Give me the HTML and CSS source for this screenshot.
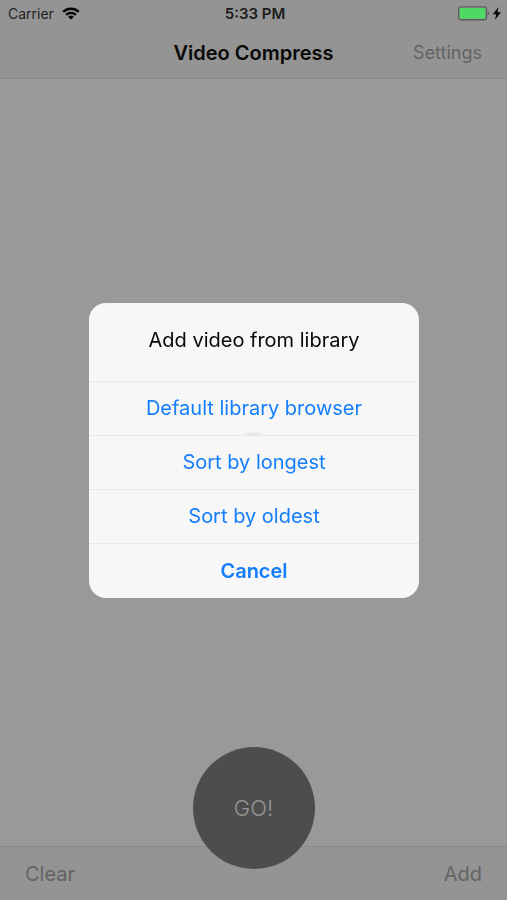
FILE: index.html
```html
<!DOCTYPE html>
<html lang="en">
<head>
<meta charset="utf-8">
<meta name="viewport" content="width=device-width, initial-scale=1">
<title>Video Compress</title>
<link rel="stylesheet" href="styles.css">
</head>
<body>
<div class="app">
  <header class="top">
    <div class="status">
      <div class="carrier">
        <span>Carrier</span>
        <svg class="wifi" width="18" height="13" viewBox="0 0 18 13" aria-hidden="true">
          <path d="M1.2 4.9a11.2 11.2 0 0 1 15.6 0" />
          <path d="M4.1 7.9a7 7 0 0 1 9.8 0" />
          <path class="wifi-dot" d="M9 12.6 6.2 9.9a4 4 0 0 1 5.600 0z" />
        </svg>
      </div>
      <span class="time">5:33 PM</span>
      <div class="power">
        <svg width="44" height="15" viewBox="0 0 44 15" aria-hidden="true">
          <rect class="cell" x="0.7" y="0.9" width="27.6" height="12.8" rx="2" />
          <rect class="charge" x="1.7" y="1.9" width="25.6" height="10.8" rx="0.8" />
          <path class="cap" d="M29.600 4.800q2.800 2.500 0 5z" />
          <path class="bolt" d="M40.600 1 34.800 8.300h3.500L36.900 14l6-7.700h-3.500z" />
        </svg>
      </div>
    </div>
    <nav class="nav">
      <h1>Video Compress</h1>
      <button class="bar-button settings" type="button">Settings</button>
    </nav>
  </header>
  <main class="content"></main>
  <footer class="toolbar">
    <button class="bar-button" type="button">Clear</button>
    <button class="go" type="button">GO!</button>
    <button class="bar-button" type="button">Add</button>
  </footer>
</div>
<div class="overlay">
  <section class="dialog" role="dialog" aria-modal="true" aria-labelledby="dialog-title">
    <h2 id="dialog-title">Add video from library</h2>
    <button class="default" type="button">Default library browser</button>
    <button type="button">Sort by longest</button>
    <button type="button">Sort by oldest</button>
    <button class="cancel" type="button">Cancel</button>
  </section>
</div>
</body>
</html>
```
FILE: styles.css
```css
* {
  box-sizing: border-box;
}

body {
  margin: 0;
  font-family: Inter, "Liberation Sans", sans-serif;
  color: #090909;
  background: #999;
}

h1,
h2 {
  margin: 0;
}

button {
  border: 0;
  padding: 0;
  background: none;
  font: inherit;
}

.app {
  display: flex;
  flex-direction: column;
  min-height: 100vh;
}

.top {
  background: #949494;
  border-bottom: 1px solid #8a8a8a;
}

.status {
  display: grid;
  grid-template-columns: 1fr auto 1fr;
  align-items: center;
  height: 27px;
  padding: 0 5px 0 8px;
  font-size: 14px;
}

.carrier {
  display: flex;
  align-items: center;
  gap: 8px;
  color: #222;
}

.wifi {
  fill: none;
  stroke: #050505;
  stroke-width: 2.3;
}

.wifi-dot {
  fill: #050505;
  stroke: none;
}

.time {
  font-size: 15px;
  font-weight: 600;
  color: #1c1c1c;
}

.power {
  display: flex;
  justify-content: flex-end;
}

.cell {
  fill: #949494;
  stroke: #5c5c5c;
  stroke-width: 1.4;
}

.charge {
  fill: #4cd964;
}

.cap {
  fill: #5c5c5c;
}

.bolt {
  fill: #050505;
}

.nav {
  display: grid;
  grid-template-columns: 1fr auto 1fr;
  align-items: center;
  height: 51px;
  padding: 0 25px;
}

.nav h1 {
  grid-column: 2;
  font-size: 20px;
  font-weight: 600;
}

.bar-button {
  font-size: 20px;
  color: #636363;
}

.settings {
  justify-self: end;
  font-size: 18px;
}

.content {
  flex: 1;
}

.toolbar {
  position: relative;
  display: flex;
  align-items: center;
  justify-content: space-between;
  height: 54px;
  padding: 0 25px;
  background: #949494;
  border-top: 1px solid #8a8a8a;
}

.go {
  position: absolute;
  left: 50%;
  bottom: 31px;
  width: 122px;
  height: 122px;
  margin-left: -61px;
  border-radius: 50%;
  background: #4d4d4d;
  color: #949494;
  font-size: 22px;
  font-weight: 300;
}

.overlay {
  position: fixed;
  inset: 0;
  display: grid;
  align-items: center;
  padding: 0 88px 0 89px;
}

.dialog {
  display: flex;
  flex-direction: column;
  overflow: hidden;
  border-radius: 17px;
  background: #f7f7f7;
  font-size: 20px;
}

.dialog h2 {
  padding: 24px 16px 28px;
  font-size: 20px;
  font-weight: 400;
  line-height: 26px;
  text-align: center;
}

.dialog button {
  height: 54px;
  border-top: 1px solid #e9e9e9;
  color: #157efb;
}

.dialog .default {
  background: radial-gradient(ellipse 12px 4px at 50% 100%, #dedede, #f7f7f7);
}

.dialog .cancel {
  height: 55px;
  font-weight: 600;
}
```
